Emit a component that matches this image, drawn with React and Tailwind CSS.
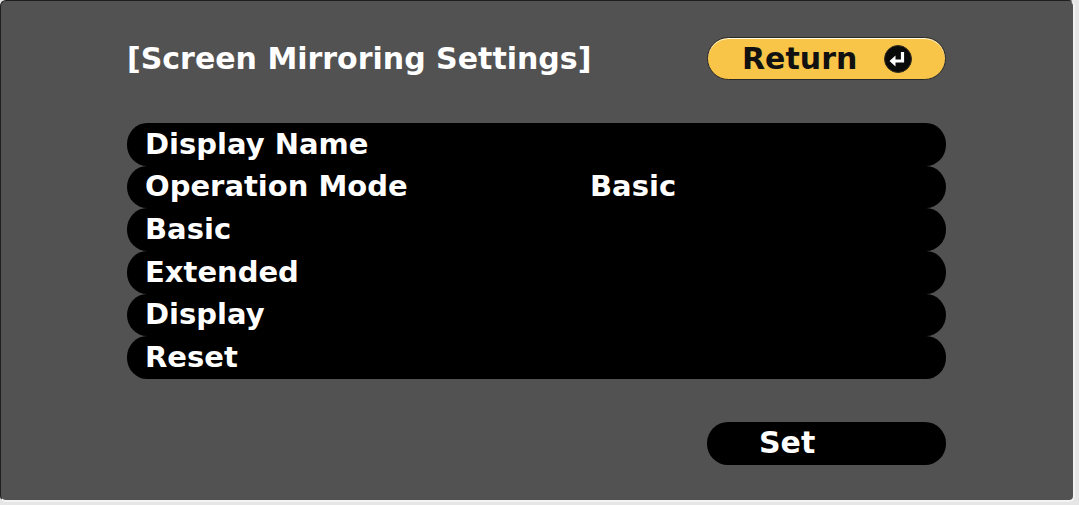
import React from 'react';

const rows = [
  { label: 'Display Name', value: '' },
  { label: 'Operation Mode', value: 'Basic' },
  { label: 'Basic', value: '' },
  { label: 'Extended', value: '' },
  { label: 'Display', value: '' },
  { label: 'Reset', value: '' },
];

const ReturnIcon = () => (
  <svg width="30" height="30" viewBox="0 0 30 30">
    <circle cx="15" cy="15" r="13.5" fill="#0a0a0a" stroke="#3a3020" strokeWidth="1" />
    <path d="M19.5 8 V17 H11" fill="none" stroke="#fff" strokeWidth="3.2" strokeLinejoin="miter" />
    <polygon points="6.5,17 12.5,11.5 12.5,22.5" fill="#fff" />
  </svg>
);

export default function App() {
  return (
    <div className="w-[1079px] h-[505px] bg-[#e6e6e6] overflow-hidden">
      <div
        className="w-[1075px] h-[502px] bg-[#525252] border border-[#1f1f1f] rounded-[6px] border-r-[2px] border-r-[#f4f4f4] border-b-[2px] border-b-[#f4f4f4] flex flex-col pt-[36px] pl-[126px] pr-[127px] text-white"
        style={{ fontFamily: '"DejaVu Sans", sans-serif' }}
      >
        {/* Header */}
        <div className="flex items-center justify-between h-[43px]">
          <h1 className="text-[30px] font-bold leading-none">[Screen Mirroring Settings]</h1>
          <button className="w-[239px] h-[43px] rounded-[22px] bg-[#f8c548] border border-[#2a2a2a] shadow-[inset_0_1px_0_#fff8e0] flex items-center pl-[34px] gap-[26px] text-[#111]">
            <span className="text-[30px] font-bold leading-none">Return</span>
            <ReturnIcon />
          </button>
        </div>

        {/* Settings list */}
        <div className="mt-[43px] flex flex-col">
          {rows.map((row) => (
            <div
              key={row.label}
              className="h-[42.67px] bg-black rounded-[20px/21px] flex items-center pl-[18px]"
            >
              <span className="w-[445px] text-[29px] font-bold leading-none">{row.label}</span>
              <span className="text-[29px] font-bold leading-none">{row.value}</span>
            </div>
          ))}
        </div>

        {/* Set button */}
        <div className="mt-[43px] flex justify-end">
          <button className="w-[239px] h-[43px] rounded-[21px] bg-black flex items-center pl-[52px]">
            <span className="text-[30px] font-bold leading-none text-white">Set</span>
          </button>
        </div>
      </div>
    </div>
  );
}
